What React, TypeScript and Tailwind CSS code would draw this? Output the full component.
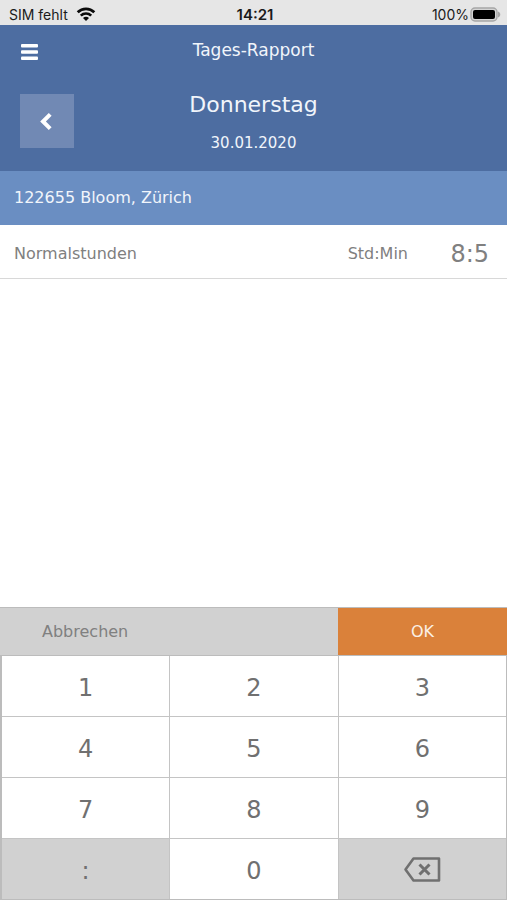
import { FC } from "react";

interface Key {
  label: string;
  muted?: boolean;
}

const keys: Key[] = [
  { label: "1" },
  { label: "2" },
  { label: "3" },
  { label: "4" },
  { label: "5" },
  { label: "6" },
  { label: "7" },
  { label: "8" },
  { label: "9" },
  { label: ":", muted: true },
  { label: "0" },
];

const WifiIcon: FC = () => (
  <svg className="h-4 w-5" viewBox="0 0 20 16" fill="none" stroke="#0a0a0a" strokeWidth="2.7">
    <path d="M1.7 5.3C6.3.6 13.7.6 18.3 5.3" />
    <path d="M4.8 8.6C7.7 5.8 12.3 5.8 15.2 8.6" />
    <path d="M10 14l-3-3.1c1.7-1.5 4.3-1.5 6 0z" fill="#0a0a0a" stroke="none" />
  </svg>
);

const BatteryIcon: FC = () => (
  <svg className="h-4 w-8" viewBox="0 0 32 16">
    <rect x="2" y="1" width="26" height="13" rx="4" fill="#d4d4d4" stroke="#a6a6a6" strokeWidth="1.4" />
    <rect x="4" y="3" width="22" height="9" rx="2" fill="#000" />
    <path d="M29 4.5c3 1 3 5 0 6z" fill="#a6a6a6" />
  </svg>
);

const BackspaceIcon: FC = () => (
  <svg
    className="h-7 w-10"
    viewBox="0 0 40 28"
    fill="none"
    stroke="#707070"
    strokeWidth="3"
    strokeLinejoin="round"
  >
    <path d="M11.5 3.5H37V25.5H11.5L3.5 14.5z" strokeWidth="2.6" />
    <path d="M17.5 9.5L27.5 19.5M27.5 9.5L17.5 19.5" />
  </svg>
);

const StatusBar: FC = () => (
  <div className="grid h-[25px] grid-cols-3 items-center bg-[#e6e6e6] pt-1 pr-[6px] pl-[9px] font-['Inter',sans-serif] text-sm leading-5 text-[#1a1a1a]">
    <div className="flex items-center gap-2 whitespace-nowrap">
      <span>SIM fehlt</span>
      <WifiIcon />
    </div>
    <span className="text-center text-[15px] leading-5 font-semibold">14:21</span>
    <div className="flex items-center justify-end">
      <span>100%</span>
      <BatteryIcon />
    </div>
  </div>
);

const Header: FC = () => (
  <header className="bg-[#4d6da1] pb-[18px] text-[#f1f5fb]">
    <div className="grid h-[52px] grid-cols-[54px_1fr_54px] items-center px-5">
      <button type="button" aria-label="Menü">
        <svg className="h-5 w-[18px]" viewBox="0 0 18 20" fill="#fff">
          <rect x="1" y="3" width="17" height="3.4" rx="1" />
          <rect x="1" y="9.3" width="17" height="3.4" rx="1" />
          <rect x="1" y="15.6" width="17" height="3.4" rx="1" />
        </svg>
      </button>
      <h1 className="text-center text-[17px]">Tages-Rapport</h1>
    </div>
    <div className="grid grid-cols-[54px_1fr_54px] items-center px-5 pt-3">
      <button
        type="button"
        aria-label="Zurück"
        className="flex h-[54px] w-[54px] items-center justify-center bg-[#7189b4]"
      >
        <svg className="h-5 w-4" viewBox="0 0 16 20" fill="none" stroke="#fff" strokeWidth="4">
          <path d="M11.2 3.3L4 10.5L11.2 17.7" />
        </svg>
      </button>
      <div className="text-center">
        <h2 className="text-[22px] leading-8">Donnerstag</h2>
        <p className="pt-3 text-[15px] leading-5">30.01.2020</p>
      </div>
    </div>
  </header>
);

const Keypad: FC = () => (
  <div className="grid grid-cols-3 gap-px border-t border-r border-b border-l-2 border-[#bcbcbc] bg-[#c4c4c4]">
    {keys.map((key) => (
      <button
        key={key.label}
        type="button"
        className={`h-[60px] pt-1 text-2xl text-[#707070] ${key.muted ? "bg-[#d1d1d1]" : "bg-white"}`}
      >
        {key.label}
      </button>
    ))}
    <button
      type="button"
      aria-label="Löschen"
      className="flex h-[60px] items-center justify-center bg-[#d1d1d1]"
    >
      <BackspaceIcon />
    </button>
  </div>
);

const App: FC = () => {
  return (
    <div className="flex min-h-screen flex-col bg-white font-['DejaVu_Sans',sans-serif]">
      <StatusBar />
      <Header />
      <main className="flex-1">
        <div className="flex h-[54px] items-center bg-[#6a8ec2] px-[14px] text-base text-[#f1f5fb]">
          122655 Bloom, Zürich
        </div>
        <div className="flex h-[54px] items-center border-b border-[#d8d8d8] px-[14px] pt-1 text-base text-[#808080]">
          <span className="flex-1">Normalstunden</span>
          <span>Std:Min</span>
          <span className="w-[85px] pr-1 text-right text-2xl">8:5</span>
        </div>
      </main>
      <div className="grid grid-cols-3 border-t border-[#bcbcbc]">
        <button
          type="button"
          className="col-span-2 h-[47px] bg-[#d1d1d1] pl-[42px] text-left text-base text-[#808080]"
        >
          Abbrechen
        </button>
        <button type="button" className="h-[47px] bg-[#da813a] text-base text-[#fbf0e6]">
          OK
        </button>
      </div>
      <Keypad />
    </div>
  );
};

export default App;
